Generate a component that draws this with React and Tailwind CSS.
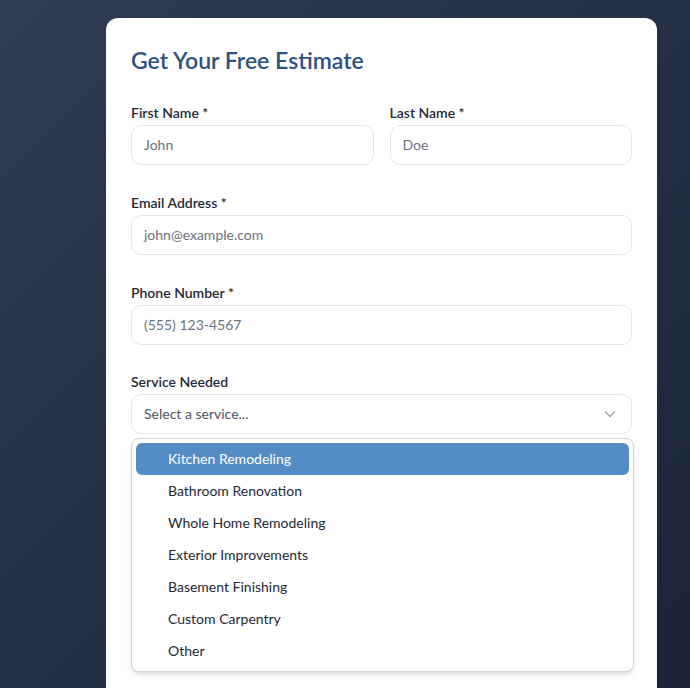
import React from 'react';

const services = [
  'Kitchen Remodeling',
  'Bathroom Renovation',
  'Whole Home Remodeling',
  'Exterior Improvements',
  'Basement Finishing',
  'Custom Carpentry',
  'Other',
];

const Field = ({ label, placeholder }) => (
  <div>
    <label className="block text-sm font-semibold text-[#1f2937] mb-0.5 leading-5">{label}</label>
    <div className="h-10 w-full rounded-[10px] border border-[#e5e7eb] px-3 flex items-center text-sm text-[#6b7280]">
      {placeholder}
    </div>
  </div>
);

const App = () => {
  return (
    <div
      className="h-[688px] w-full overflow-hidden bg-gradient-to-br from-[#2f3c53] to-[#1b2436] pt-[18px]"
      style={{ fontFamily: 'Lato, "Noto Sans", sans-serif' }}
    >
      <div className="ml-[106px] w-[551px] min-h-[720px] rounded-xl bg-white px-[25px] pt-[26px]">
        <h2 className="text-[23px] font-semibold text-[#2c5282] leading-8 mb-[27px]">Get Your Free Estimate</h2>

        <div className="flex flex-col gap-7">
          <div className="grid grid-cols-2 gap-4">
            <Field label="First Name *" placeholder="John" />
            <Field label="Last Name *" placeholder="Doe" />
          </div>
          <Field label="Email Address *" placeholder="john@example.com" />
          <Field label="Phone Number *" placeholder="(555) 123-4567" />

          <div className="relative -mt-px">
            <label className="block text-sm font-semibold text-[#1f2937] mb-0.5 leading-5">Service Needed</label>
            <div className="h-10 w-full rounded-[10px] border border-[#e5e7eb] px-3 flex items-center justify-between text-sm text-[#4b5563]">
              <span>Select a service...</span>
              <svg width="12" height="8" viewBox="0 0 12 8" fill="none" className="mr-[3px]">
                <path d="M1 1.5l5 5 5-5" stroke="#9ca3af" strokeWidth="1.3" />
              </svg>
            </div>

            {/* open option list */}
            <div className="absolute left-0 right-[-2px] top-[66px] z-10 rounded-lg border border-[#d1d5db] bg-white p-[4px] shadow-md">
              {services.map((s, i) => (
                <div
                  key={s}
                  className={`h-8 flex items-center pl-8 text-sm rounded-md ${
                    i === 0 ? 'bg-[#548cc7] text-white' : 'text-[#1f2937]'
                  }`}
                >
                  {s}
                </div>
              ))}
            </div>
          </div>
        </div>
      </div>
    </div>
  );
};

export default App;
